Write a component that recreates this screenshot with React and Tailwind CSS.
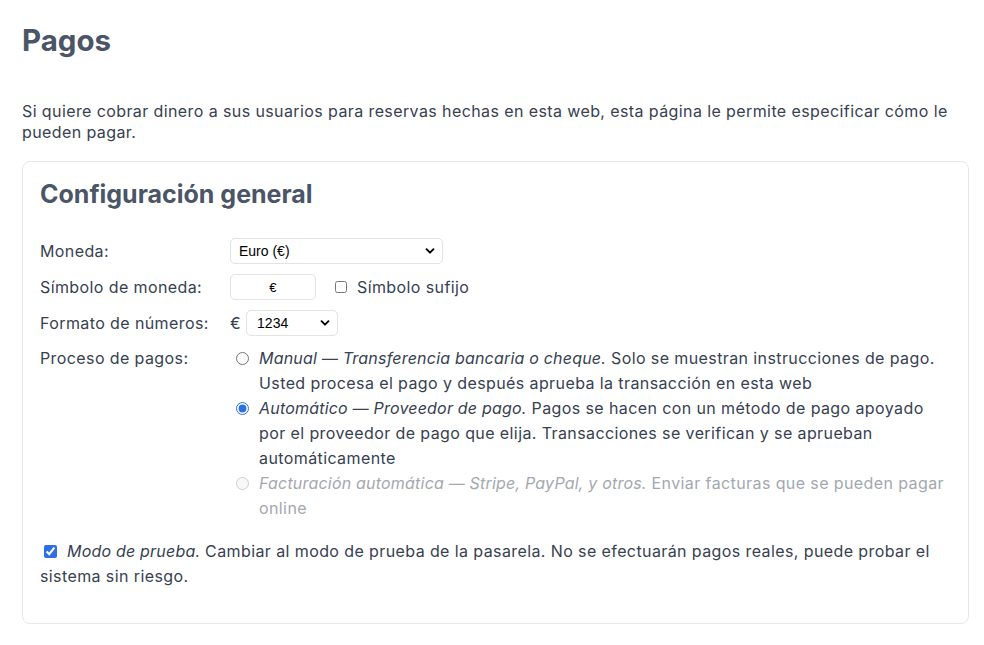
import { useState } from "react";

const Chevron = () => (
  <svg
    className="pointer-events-none absolute right-[8px] top-1/2 -translate-y-1/2 w-[10px] h-[10px] text-black"
    viewBox="0 0 10 10"
    fill="none"
  >
    <path d="M1.5 3.2 L5 6.7 L8.5 3.2" stroke="currentColor" strokeWidth="1.9" strokeLinecap="round" strokeLinejoin="round" />
  </svg>
);

function Row({ label, children }) {
  return (
    <div className="flex items-center h-[26px] mb-[10px]">
      <div className="w-[190px] shrink-0">{label}</div>
      {children}
    </div>
  );
}

export default function App() {
  const [method, setMethod] = useState("auto");
  const [suffix, setSuffix] = useState(false);
  const [testMode, setTestMode] = useState(true);

  const methods = [
    {
      value: "manual",
      title: "Manual — Transferencia bancaria o cheque.",
      text: " Solo se muestran instrucciones de pago. Usted procesa el pago y después aprueba la transacción en esta web",
    },
    {
      value: "auto",
      title: "Automático — Proveedor de pago.",
      text: " Pagos se hacen con un método de pago apoyado por el proveedor de pago que elija. Transacciones se verifican y se aprueban automáticamente",
    },
    {
      value: "invoice",
      title: "Facturación automática — Stripe, PayPal, y otros.",
      text: " Enviar facturas que se pueden pagar online",
      disabled: true,
    },
  ];

  return (
    <div className="min-h-[645px] bg-white pl-[22px] pr-[15px] pt-[22px] text-[16px] tracking-[0.4px] text-[#374151] font-['Inter','Noto_Sans',sans-serif]">
      <h1 className="text-[29.5px] leading-[36px] font-bold text-[#4a5568] tracking-[0px]">Pagos</h1>

      <p className="mt-[43px] leading-[21px]">
        Si quiere cobrar dinero a sus usuarios para reservas hechas en esta web, esta página le permite especificar cómo le pueden pagar.
      </p>

      <div className="mt-[18px] border border-[#e5e7eb] rounded-[8px] px-[17px] pt-[17px] pb-[34px]">
        <h2 className="text-[25px] leading-[30px] font-bold text-[#4a5568] tracking-[0px] mb-[29px]">
          Configuración general
        </h2>

        <Row label="Moneda:">
          <div className="relative">
            <select className="appearance-none w-[213px] h-[26px] pl-[8px] bg-white border border-[#e3e3e3] rounded-[5px] text-[14px] tracking-normal text-black font-['Liberation_Sans',Arial,sans-serif] outline-none">
              <option>Euro (€)</option>
            </select>
            <Chevron />
          </div>
        </Row>

        <Row label="Símbolo de moneda:">
          <input
            defaultValue="€"
            className="w-[86px] h-[26px] text-center bg-white border border-[#e3e3e3] rounded-[5px] text-[13px] text-black font-['Liberation_Sans',Arial,sans-serif] outline-none"
          />
          <label className="flex items-center ml-[19px]">
            <input
              type="checkbox"
              checked={suffix}
              onChange={(e) => setSuffix(e.target.checked)}
              className="w-[12px] h-[12px] m-0 mr-[10px]"
            />
            Símbolo sufijo
          </label>
        </Row>

        <Row label="Formato de números:">
          <span className="mr-[5px]">€</span>
          <div className="relative">
            <select className="appearance-none w-[92px] h-[26px] pl-[10px] bg-white border border-[#e3e3e3] rounded-[5px] text-[14px] tracking-normal text-black font-['Liberation_Sans',Arial,sans-serif] outline-none">
              <option>1234</option>
            </select>
            <Chevron />
          </div>
        </Row>

        <div className="flex">
          <div className="w-[190px] shrink-0 leading-[25px]">Proceso de pagos:</div>
          <div className="w-[721px]">
            {methods.map((m) => (
              <label
                key={m.value}
                className={`flex leading-[25px] ${m.disabled ? "text-[#a3a8b0]" : ""}`}
              >
                <span className="shrink-0 w-[29px] h-[25px] flex items-center pl-[6px]">
                  <input
                    type="radio"
                    name="method"
                    value={m.value}
                    disabled={m.disabled}
                    checked={method === m.value}
                    onChange={() => setMethod(m.value)}
                    className="w-[13px] h-[13px] m-0 accent-[#2f6fe4]"
                  />
                </span>
                <span>
                  <em className="tracking-[0.2px]">{m.title}</em>
                  {m.text}
                </span>
              </label>
            ))}
          </div>
        </div>

        <p className="mt-[18px] leading-[25px]">
          <input
            type="checkbox"
            checked={testMode}
            onChange={(e) => setTestMode(e.target.checked)}
            className="w-[13px] h-[13px] ml-[4px] mr-[10px] align-[-1px] accent-[#2f6fe4]"
          />
          <em className="tracking-[0.2px]">Modo de prueba.</em> Cambiar al modo de prueba de la pasarela. No se efectuarán pagos reales, puede probar el sistema sin riesgo.
        </p>
      </div>
    </div>
  );
}
